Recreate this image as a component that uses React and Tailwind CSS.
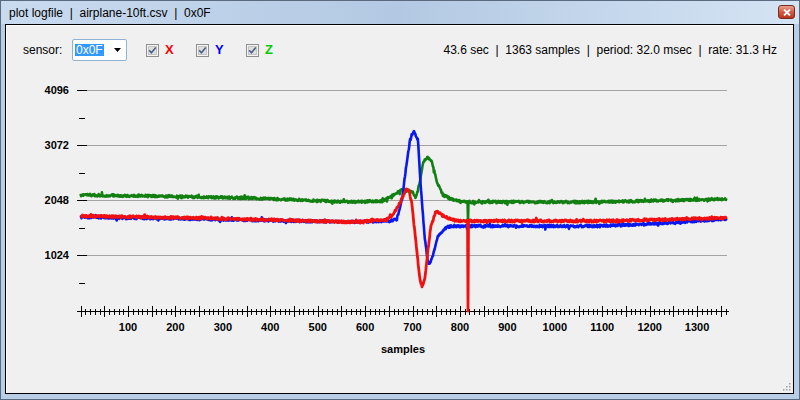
import React from 'react';

const N = 1363;
const X0 = 80.6;
const DX = 0.4742;
const SPIKE_I = 817;

function makeRng(seed) {
  let a = seed;
  return () => {
    a = (a + 0x6d2b79f5) | 0;
    let t = Math.imul(a ^ (a >>> 15), 1 | a);
    t = (t + Math.imul(t ^ (t >>> 7), 61 | t)) ^ t;
    return ((t ^ (t >>> 14)) >>> 0) / 4294967296;
  };
}

function interp(keys, x) {
  if (x <= keys[0][0]) return keys[0][1];
  for (let k = 1; k < keys.length; k += 1) {
    const [x1, y1] = keys[k];
    if (x <= x1) {
      const [x0, y0] = keys[k - 1];
      return y0 + ((y1 - y0) * (x - x0)) / (x1 - x0);
    }
  }
  return keys[keys.length - 1][1];
}

function buildSeries(keys, seed, noise, spikeY) {
  const rand = makeRng(seed);
  const pts = [];
  for (let i = 0; i < N; i += 1) {
    const x = X0 + i * DX;
    let y = interp(keys, x) + (rand() - 0.5) * noise;
    if (rand() < 0.05) y += (rand() - 0.5) * noise * 2;
    if (i === SPIKE_I && spikeY) y = spikeY;
    pts.push(`${x.toFixed(2)},${y.toFixed(2)}`);
  }
  return pts.join(' ');
}

const greenKeys = [
  [81, 195], [150, 196], [250, 198], [350, 202], [383, 201], [392, 196], [402, 190],
  [410, 191], [413, 193], [416, 198], [420, 181], [423, 163], [427, 157], [432, 162],
  [437, 182], [443, 195], [453, 200], [465, 202], [600, 202], [727, 199],
];
const redKeys = [
  [81, 216], [200, 218], [350, 222], [385, 220], [392, 216], [400, 203], [406, 189],
  [409, 190], [412, 205], [417, 253], [420, 280], [422, 287], [425, 278], [428, 250],
  [431, 225], [436, 211], [445, 217], [457, 221], [600, 221], [727, 218],
];
const blueKeys = [
  [81, 217], [200, 219], [350, 222], [390, 221], [397, 219], [402, 200], [406, 168],
  [410, 140], [414, 132], [418, 140], [420, 175], [422, 203], [425, 240], [428, 262],
  [430, 264], [433, 256], [438, 236], [447, 227], [455, 226], [600, 226], [650, 224],
  [727, 219],
];

function CheckBox() {
  return (
    <svg width="13" height="13" viewBox="0 0 13 13">
      <rect x="0.5" y="0.5" width="12" height="12" fill="#f4f4f4" stroke="#8e8f8f" />
      <rect x="2.5" y="2.5" width="8" height="8" fill="#dedede" stroke="#c4c4c4" />
      <path d="M3.2 6.3 L5.4 8.8 L9.8 3.4" stroke="#4a5f87" strokeWidth="1.6" fill="none" />
    </svg>
  );
}

function Chart() {
  const green = buildSeries(greenKeys, 7, 2.4, 221);
  const blue = buildSeries(blueKeys, 19, 2.4, null);
  const red = buildSeries(redKeys, 41, 2.2, 311);

  const majors = [
    { y: 90, label: '4096' },
    { y: 145, label: '3072' },
    { y: 200, label: '2048' },
    { y: 255, label: '1024' },
  ];
  const minors = [118, 173, 228, 283];

  const xTicks = [];
  for (let s = 0; s <= 1360; s += 10) {
    const x = Math.round(X0 + s * DX) + 0.5;
    const big = s % 50 === 0;
    xTicks.push(
      <line key={s} x1={x} x2={x} y1={big ? 306 : 309} y2={big ? 317 : 315} stroke="#000" />
    );
  }
  const xLabels = [];
  for (let s = 100; s <= 1300; s += 100) {
    xLabels.push(
      <text key={s} x={X0 + s * DX} y={331} textAnchor="middle">
        {s}
      </text>
    );
  }

  return (
    <svg
      width="787"
      height="322"
      viewBox="6 70 787 322"
      className="block font-['Liberation_Sans',Arial,sans-serif]"
    >
      <g shapeRendering="crispEdges">
        {majors.map((m) => (
          <g key={m.label}>
            <line x1="87" x2="727" y1={m.y + 0.5} y2={m.y + 0.5} stroke="#a3a3a3" />
            <line x1="77" x2="87" y1={m.y + 0.5} y2={m.y + 0.5} stroke="#000" />
          </g>
        ))}
        {minors.map((y) => (
          <line key={y} x1="79" x2="85" y1={y + 0.5} y2={y + 0.5} stroke="#000" />
        ))}
        <line x1="77" x2="729" y1="311.5" y2="311.5" stroke="#000" />
        {xTicks}
      </g>
      <g fontSize="11" fontWeight="bold">
        {majors.map((m) => (
          <text key={m.label} x="69" y={m.y + 4} textAnchor="end">
            {m.label}
          </text>
        ))}
        {xLabels}
        <text x="403" y="353" textAnchor="middle">
          samples
        </text>
      </g>
      <polyline points={green} fill="none" stroke="#118011" strokeWidth="2.6" strokeLinejoin="round" />
      <polyline points={blue} fill="none" stroke="#0a18f0" strokeWidth="2.6" strokeLinejoin="round" />
      <polyline points={red} fill="none" stroke="#f01010" strokeWidth="2.8" strokeLinejoin="round" />
    </svg>
  );
}

export default function App() {
  return (
    <div className="w-[800px] h-[400px] flex flex-col border border-[#5a6b80] bg-[#b8cee7] font-['Liberation_Sans',Arial,sans-serif] text-black">
      <div className="h-[23px] flex items-center bg-gradient-to-r from-[#c9dbef] via-[#b3c9e3] to-[#d5e4f4]">
        <span className="pl-[8px] text-[12px]">plot logfile&nbsp; |&nbsp; airplane-10ft.csv&nbsp; |&nbsp; 0x0F</span>
        <div className="ml-auto mr-[4px] self-start mt-[4px] w-[17px] h-[14px] rounded-[3px] border border-[#7b2b1e] bg-gradient-to-b from-[#e9a08f] via-[#d25c43] to-[#b9341c] flex items-center justify-center">
          <svg width="8" height="7" viewBox="0 0 8 7">
            <path d="M1 0.5 L7 6.5 M7 0.5 L1 6.5" stroke="#fff" strokeWidth="1.8" />
          </svg>
        </div>
      </div>
      <div className="relative flex-1 ml-[4px] mr-[5px] mb-[5px] border border-black bg-[#f0f0f0] shadow-[inset_1px_1px_0_#ffffff] flex flex-col">
        <div className="mt-[14px] h-[22px] flex items-center pl-[17px] pr-[16px] text-[12px]">
          <span className="w-[49px]">sensor:</span>
          <div className="w-[55px] h-[22px] rounded-[2px] border border-[#8fb2d6] bg-white flex items-center pl-[2px] pr-[5px]">
            <span className="bg-[#3399ff] text-white leading-[12px] px-[1px]">0x0F</span>
            <svg className="ml-auto" width="7" height="4" viewBox="0 0 7 4">
              <path d="M0 0 H7 L3.5 4 Z" fill="#000" />
            </svg>
          </div>
          <div className="ml-[19px] flex">
            <div className="w-[50px] flex items-center gap-[6px]">
              <CheckBox />
              <span className="font-bold text-[13px] text-[#ff0000]">X</span>
            </div>
            <div className="w-[50px] flex items-center gap-[6px]">
              <CheckBox />
              <span className="font-bold text-[13px] text-[#0000ff]">Y</span>
            </div>
            <div className="w-[50px] flex items-center gap-[6px]">
              <CheckBox />
              <span className="font-bold text-[13px] text-[#00cc00]">Z</span>
            </div>
          </div>
          <span className="ml-auto whitespace-pre">43.6 sec  |  1363 samples  |  period: 32.0 msec  |  rate: 31.3 Hz</span>
        </div>
        <div className="mt-[9px]">
          <Chart />
        </div>
        <svg className="absolute right-[2px] bottom-[2px]" width="9" height="9" viewBox="0 0 9 9">
          {[[7, 1], [4, 4], [7, 4], [1, 7], [4, 7], [7, 7]].map(([x, y]) => (
            <rect key={`${x}-${y}`} x={x} y={y} width="1.5" height="1.5" fill="#a0a0a0" />
          ))}
        </svg>
      </div>
    </div>
  );
}
